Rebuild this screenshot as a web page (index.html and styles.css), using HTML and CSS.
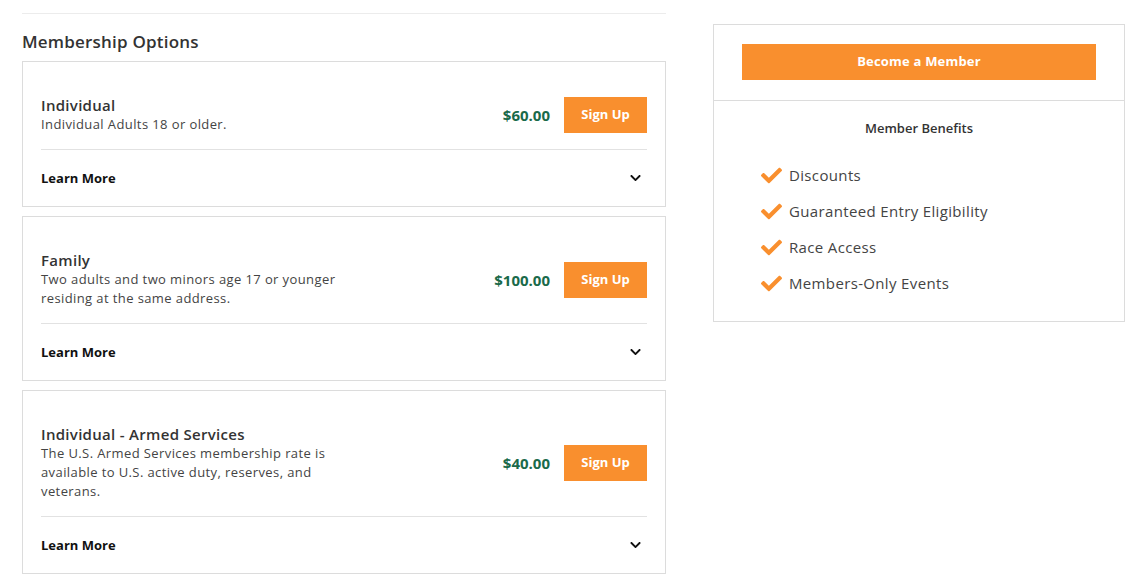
FILE: index.html
```html
<!DOCTYPE html>
<html lang="en">
<head>
<meta charset="utf-8">
<title>Membership Options</title>
<link rel="stylesheet" href="styles.css">
</head>
<body>
<div class="page">
  <main class="main">
    <hr class="top-rule">
    <h2 class="heading">Membership Options</h2>
    <div class="cards">
      <section class="card">
        <div class="card-row">
          <div class="card-text">
            <h3 class="card-title">Individual</h3>
            <p class="card-desc">Individual Adults 18 or older.</p>
          </div>
          <div class="card-action">
            <span class="price">$60.00</span>
            <a class="btn btn-sign" href="#">Sign Up</a>
          </div>
        </div>
        <div class="learn">
          <span>Learn More</span>
          <svg class="chev" viewBox="0 0 448 512"><path d="M207.029 381.476L12.686 187.132c-9.373-9.373-9.373-24.569 0-33.941l22.667-22.667c9.357-9.357 24.522-9.375 33.901-.04L224 284.505l154.745-154.021c9.379-9.335 24.544-9.317 33.901.04l22.667 22.667c9.373 9.373 9.373 24.569 0 33.941L240.971 381.476c-9.373 9.372-24.569 9.372-33.942 0z"/></svg>
        </div>
      </section>
      <section class="card">
        <div class="card-row">
          <div class="card-text">
            <h3 class="card-title">Family</h3>
            <p class="card-desc">Two adults and two minors age 17 or younger residing at the same address.</p>
          </div>
          <div class="card-action">
            <span class="price">$100.00</span>
            <a class="btn btn-sign" href="#">Sign Up</a>
          </div>
        </div>
        <div class="learn">
          <span>Learn More</span>
          <svg class="chev" viewBox="0 0 448 512"><path d="M207.029 381.476L12.686 187.132c-9.373-9.373-9.373-24.569 0-33.941l22.667-22.667c9.357-9.357 24.522-9.375 33.901-.04L224 284.505l154.745-154.021c9.379-9.335 24.544-9.317 33.901.04l22.667 22.667c9.373 9.373 9.373 24.569 0 33.941L240.971 381.476c-9.373 9.372-24.569 9.372-33.942 0z"/></svg>
        </div>
      </section>
      <section class="card">
        <div class="card-row">
          <div class="card-text">
            <h3 class="card-title">Individual - Armed Services</h3>
            <p class="card-desc">The U.S. Armed Services membership rate is available to U.S. active duty, reserves, and veterans.</p>
          </div>
          <div class="card-action">
            <span class="price">$40.00</span>
            <a class="btn btn-sign" href="#">Sign Up</a>
          </div>
        </div>
        <div class="learn">
          <span>Learn More</span>
          <svg class="chev" viewBox="0 0 448 512"><path d="M207.029 381.476L12.686 187.132c-9.373-9.373-9.373-24.569 0-33.941l22.667-22.667c9.357-9.357 24.522-9.375 33.901-.04L224 284.505l154.745-154.021c9.379-9.335 24.544-9.317 33.901.04l22.667 22.667c9.373 9.373 9.373 24.569 0 33.941L240.971 381.476c-9.373 9.372-24.569 9.372-33.942 0z"/></svg>
        </div>
      </section>
    </div>
  </main>
  <aside class="side">
    <div class="side-top">
      <a class="btn btn-become" href="#">Become a Member</a>
    </div>
    <div class="benefits">
      <h4 class="benefits-title">Member Benefits</h4>
      <ul class="benefit-list">
        <li><svg class="check" viewBox="0 0 512 512"><path d="M173.898 439.404l-166.4-166.4c-9.997-9.997-9.997-26.206 0-36.204l36.203-36.204c9.997-9.998 26.207-9.998 36.204 0L192 312.690 432.095 72.596c9.997-9.997 26.207-9.997 36.204 0l36.203 36.204c9.997 9.997 9.997 26.206 0 36.204l-294.4 294.401c-9.998 9.997-26.207 9.997-36.204-.001z"/></svg>Discounts</li>
        <li><svg class="check" viewBox="0 0 512 512"><path d="M173.898 439.404l-166.4-166.4c-9.997-9.997-9.997-26.206 0-36.204l36.203-36.204c9.997-9.998 26.207-9.998 36.204 0L192 312.690 432.095 72.596c9.997-9.997 26.207-9.997 36.204 0l36.203 36.204c9.997 9.997 9.997 26.206 0 36.204l-294.4 294.401c-9.998 9.997-26.207 9.997-36.204-.001z"/></svg>Guaranteed Entry Eligibility</li>
        <li><svg class="check" viewBox="0 0 512 512"><path d="M173.898 439.404l-166.4-166.4c-9.997-9.997-9.997-26.206 0-36.204l36.203-36.204c9.997-9.998 26.207-9.998 36.204 0L192 312.690 432.095 72.596c9.997-9.997 26.207-9.997 36.204 0l36.203 36.204c9.997 9.997 9.997 26.206 0 36.204l-294.4 294.401c-9.998 9.997-26.207 9.997-36.204-.001z"/></svg>Race Access</li>
        <li><svg class="check" viewBox="0 0 512 512"><path d="M173.898 439.404l-166.4-166.4c-9.997-9.997-9.997-26.206 0-36.204l36.203-36.204c9.997-9.998 26.207-9.998 36.204 0L192 312.690 432.095 72.596c9.997-9.997 26.207-9.997 36.204 0l36.203 36.204c9.997 9.997 9.997 26.206 0 36.204l-294.4 294.401c-9.998 9.997-26.207 9.997-36.204-.001z"/></svg>Members-Only Events</li>
      </ul>
    </div>
  </aside>
</div>
</body>
</html>
```

FILE: styles.css
```css
* { box-sizing: border-box; }
html, body { margin: 0; padding: 0; background: #fff; }
body {
  font-family: "Open Sans", "Liberation Sans", sans-serif;
  color: #333;
}
.page {
  display: flex;
  align-items: flex-start;
  gap: 47px;
  padding: 0 19px 0 22px;
}
.main { width: 644px; flex: none; }
.top-rule {
  margin: 13px 0 0;
  border: 0;
  border-top: 1px solid #ececec;
}
.heading {
  margin: 0;
  padding-top: 16px;
  height: 47px;
  font-size: 17px;
  line-height: 24px;
  font-weight: 600;
  letter-spacing: 0.2px;
  color: #333;
}
.cards { display: flex; flex-direction: column; gap: 9px; }
.card {
  border: 1px solid #dcdcdc;
  padding: 34px 18px 0;
}
.card-row {
  display: flex;
  align-items: center;
  justify-content: space-between;
  padding-bottom: 15px;
  border-bottom: 1px solid #e2e2e2;
}
.card-text { width: 312px; }
.card-title {
  margin: 0;
  font-size: 15px;
  line-height: 19px;
  font-weight: 600;
  letter-spacing: 0.3px;
  color: #333;
}
.card-desc {
  margin: 0;
  font-size: 13px;
  line-height: 19px;
  letter-spacing: 0.4px;
  color: #444;
}
.card-action { display: flex; align-items: center; gap: 14px; }
.price {
  font-size: 15px;
  font-weight: 700;
  color: #1a6a4a;
}
.btn {
  display: flex;
  align-items: center;
  justify-content: center;
  background: #f98f2e;
  color: #fff;
  text-decoration: none;
  font-size: 13px;
  font-weight: 700;
  height: 36px;
  padding-bottom: 2px;
}
.btn-sign { width: 83px; }
.learn {
  height: 56px;
  display: flex;
  align-items: center;
  justify-content: space-between;
  padding-right: 6px;
  padding-bottom: 1px;
  font-size: 13px;
  font-weight: 700;
  color: #111;
}
.chev { width: 11px; height: 12px; fill: #111; }
.side {
  width: 412px;
  flex: none;
  margin-top: 24px;
  border: 1px solid #dcdcdc;
}
.side-top {
  padding: 19px 28px 20px;
  border-bottom: 1px solid #dcdcdc;
}
.btn-become { width: 100%; letter-spacing: 0.2px; }
.benefits { padding: 18px 0 20px; }
.benefits-title {
  margin: 0;
  text-align: center;
  font-size: 13px;
  line-height: 18px;
  font-weight: 600;
  color: #333;
}
.benefit-list {
  list-style: none;
  margin: 0;
  padding: 20px 0 0 47px;
}
.benefit-list li {
  display: flex;
  align-items: center;
  height: 36px;
  font-size: 15px;
  letter-spacing: 0.35px;
  color: #444;
}
.check { width: 21px; height: 21px; fill: #f98f2e; margin-right: 7px; }
```
